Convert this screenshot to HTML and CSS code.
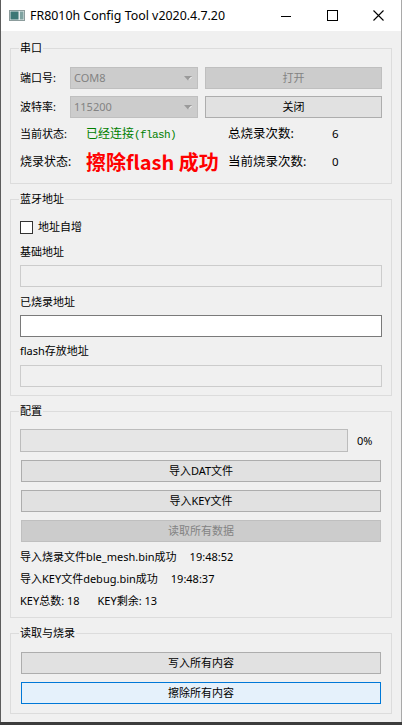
FILE: index.html
```html
<!DOCTYPE html>
<html lang="zh">
<head>
<meta charset="utf-8">
<title>FR8010h Config Tool</title>
<link rel="stylesheet" href="styles.css">
</head>
<body>
<div class="window">
  <div class="titlebar">
    <svg class="app-icon" width="16" height="11" viewBox="0 0 16 11">
      <rect x="0.5" y="0.5" width="15" height="10" fill="#e4eaea" stroke="#8c9c9c"/>
      <rect x="1.5" y="1.5" width="8" height="8" fill="#3d7775"/>
      <rect x="11" y="1.5" width="3.5" height="8" fill="#7fa3a1"/>
    </svg>
    <span class="title">FR8010h Config Tool v2020.4.7.20</span>
    <div class="controls">
      <div class="ctl"><svg width="10" height="10" viewBox="0 0 10 10"><line x1="0" y1="5.5" x2="10" y2="5.5" stroke="#000" stroke-width="1"/></svg></div>
      <div class="ctl"><svg width="11" height="11" viewBox="0 0 11 11"><rect x="0.5" y="0.5" width="10" height="10" fill="none" stroke="#000" stroke-width="1"/></svg></div>
      <div class="ctl"><svg width="11" height="11" viewBox="0 0 11 11"><path d="M0.5 0.5 L10.5 10.5 M10.5 0.5 L0.5 10.5" stroke="#000" stroke-width="1.1" fill="none"/></svg></div>
    </div>
  </div>

  <div class="client">
    <section class="group g1">
      <div class="group-title">串口</div>
      <div class="row r1">
        <span class="lbl">端口号:</span>
        <div class="combo"><span>COM8</span><svg class="arrow" width="8" height="5" viewBox="0 0 8 5"><path d="M0 0 H8 L4 4.5 Z" fill="#9a9a9a"/><path d="M5 3.5 L7.5 1" stroke="#fff" stroke-width="1"/></svg></div>
        <div class="btn disabled">打开</div>
      </div>
      <div class="row r2">
        <span class="lbl">波特率:</span>
        <div class="combo"><span>115200</span><svg class="arrow" width="8" height="5" viewBox="0 0 8 5"><path d="M0 0 H8 L4 4.5 Z" fill="#9a9a9a"/><path d="M5 3.5 L7.5 1" stroke="#fff" stroke-width="1"/></svg></div>
        <div class="btn">关闭</div>
      </div>
      <div class="status s1">
        <div class="half">
          <span class="slbl">当前状态:</span>
          <span class="green">已经连接<span class="mono">(flash)</span></span>
        </div>
        <div class="half right">
          <span class="blbl">总烧录次数:</span>
          <span class="val">6</span>
        </div>
      </div>
      <div class="status s2">
        <div class="half">
          <span class="slbl big">烧录状态:</span>
          <span class="red">擦除flash 成功</span>
        </div>
        <div class="half right">
          <span class="blbl">当前烧录次数:</span>
          <span class="val">0</span>
        </div>
      </div>
    </section>

    <section class="group g2">
      <div class="group-title">蓝牙地址</div>
      <div class="check-row"><span class="checkbox"></span><span>地址自增</span></div>
      <div class="flabel f1">基础地址</div>
      <div class="input disabled-input"></div>
      <div class="flabel f2">已烧录地址</div>
      <div class="input"></div>
      <div class="flabel f3">flash存放地址</div>
      <div class="input disabled-input i3"></div>
    </section>

    <section class="group g3">
      <div class="group-title">配置</div>
      <div class="progress-row">
        <div class="progress"></div>
        <span class="pct">0%</span>
      </div>
      <div class="btn wide">导入DAT文件</div>
      <div class="btn wide">导入KEY文件</div>
      <div class="btn wide disabled">读取所有数据</div>
      <div class="log l1">导入烧录文件ble_mesh.bin成功<span class="time t1">19:48:52</span></div>
      <div class="log">导入KEY文件debug.bin成功<span class="time t2">19:48:37</span></div>
      <div class="log">KEY总数: 18<span class="time t3">KEY剩余: 13</span></div>
    </section>

    <section class="group g4">
      <div class="group-title">读取与烧录</div>
      <div class="btn wide first">写入所有内容</div>
      <div class="btn wide focus">擦除所有内容</div>
    </section>
  </div>
</div>
</body>
</html>
```

FILE: styles.css
```css
* { box-sizing: border-box; }
html, body { margin: 0; padding: 0; }
body {
  width: 402px;
  height: 725px;
  background: #3c3c3c;
  font-family: "Noto Sans", "Noto Sans CJK SC", sans-serif;
  font-size: 11px;
  color: #000;
  overflow: hidden;
}
.window {
  width: 402px;
  height: 722px;
  background: #f0f0f0;
  border-left: 1px solid #5c5c5c;
  border-right: 1px solid #a9a9a9;
  display: flex;
  flex-direction: column;
}
.titlebar {
  height: 31px;
  background: #fff;
  display: flex;
  align-items: center;
  padding-left: 8px;
  flex: none;
}
.app-icon { display: block; margin-right: 5px; }
.title {
  font-family: "Noto Sans", sans-serif;
  font-size: 12.4px;
  line-height: 16px;
  flex: 1;
}
.controls { display: flex; height: 31px; }
.ctl {
  width: 46px;
  height: 31px;
  display: flex;
  align-items: center;
  justify-content: center;
}
.ctl svg { display: block; }

.client {
  padding: 0 9px;
  display: flex;
  flex-direction: column;
}
.group {
  border: 1px solid #dcdcdc;
  padding: 0 9px 8px 9px;
  margin-top: 15px;
  display: flex;
  flex-direction: column;
}
.g1 { margin-top: 17px; padding-bottom: 7px; }
.g4 { padding-bottom: 9px; }
.group-title {
  margin-top: -8px;
  margin-left: -1px;
  padding: 0 1px;
  height: 14px;
  line-height: 14px;
  background: #f0f0f0;
  align-self: flex-start;
}

.row {
  display: flex;
  align-items: center;
  height: 22px;
}
.r1 { margin-top: 12px; }
.r2 { margin-top: 7px; }
.lbl { width: 50px; line-height: 16px; }
.combo {
  width: 128px;
  height: 22px;
  margin-right: 7px;
  border: 1px solid #bfbfbf;
  background: #cccccc;
  color: #838383;
  padding: 0 5px 0 3px;
  display: flex;
  align-items: center;
  justify-content: space-between;
  line-height: 16px;
}
.arrow { display: block; }
.btn {
  height: 22px;
  border: 1px solid #adadad;
  background: #e1e1e1;
  text-align: center;
  line-height: 20px;
  flex: 1;
}
.btn.disabled {
  background: #cccccc;
  border-color: #bfbfbf;
  color: #838383;
}
.btn.wide {
  flex: none;
  margin: 8px 1px 0 1px;
}
.btn.first { margin-top: 12px; }
.btn.focus {
  background: #e5f1fb;
  border-color: #0078d7;
}

.status { display: flex; align-items: center; }
.s1 { margin-top: 6px; height: 20px; }
.s2 { margin-top: 4px; height: 28px; }
.half { width: 208px; display: flex; align-items: center; }
.half.right { width: auto; flex: 1; }
.slbl { width: 66px; line-height: 16px; }
.slbl.big { font-size: 12px; }
.green { color: #008000; line-height: 16px; font-size: 12px; }
.mono {
  font-family: "Liberation Mono", monospace;
  font-size: 11px;
  letter-spacing: -0.6px;
}
.red {
  color: #ff0000;
  font-family: "Noto Sans CJK SC", sans-serif;
  font-weight: 700;
  font-size: 20px;
  line-height: 26px;
}
.blbl { width: 104px; font-size: 12.5px; line-height: 18px; }
.val { line-height: 16px; font-size: 11.5px; }

.check-row {
  margin-top: 13px;
  height: 16px;
  display: flex;
  align-items: center;
  line-height: 16px;
}
.checkbox {
  width: 13px;
  height: 13px;
  border: 1px solid #333;
  background: #fff;
  margin-right: 5px;
}
.flabel { line-height: 16px; height: 16px; }
.f1 { margin-top: 9px; }
.f2 { margin-top: 7px; }
.f3 { margin-top: 6px; }
.input {
  height: 22px;
  margin-top: 5px;
  background: #fff;
  border: 1px solid #7a7a7a;
}
.disabled-input {
  background: #f0f0f0;
  border-color: #cccccc;
}
.i3 { margin-top: 6px; }

.progress-row {
  margin-top: 11px;
  display: flex;
  align-items: center;
}
.progress {
  width: 328px;
  height: 23px;
  background: #e6e6e6;
  border: 1px solid #bcbcbc;
}
.pct { margin-left: 9px; line-height: 16px; }

.log { line-height: 16px; height: 16px; margin-top: 6px; white-space: nowrap; }
.l1 { margin-top: 7px; }
.time { margin-left: 13px; }
.t3 { margin-left: 18px; }
```
